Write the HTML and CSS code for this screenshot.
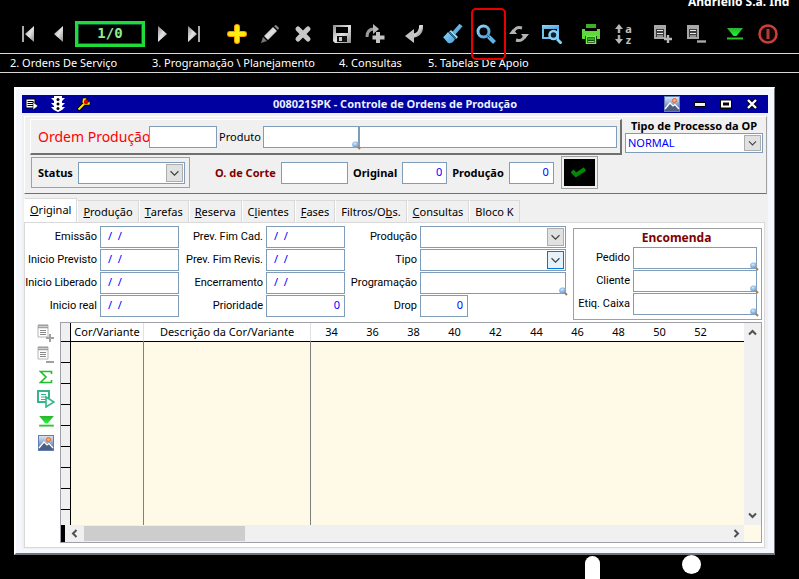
FILE: index.html
```html
<!DOCTYPE html>
<html lang="pt-BR">
<head>
    <meta charset="UTF-8">
    <meta name="viewport" content="width=device-width, initial-scale=1.0">
    <title>Controle de Ordens de Produção</title>
    <link rel="stylesheet" href="styles.css">
</head>
<body>
    <!-- Shared icons -->
    <svg class="defs" width="0" height="0">
        <defs>
            <linearGradient id="silver" x1="0" y1="0" x2="1" y2="1">
                <stop offset="0" stop-color="#8c8c8c"/>
                <stop offset="0.5" stop-color="#e4e4e4"/>
                <stop offset="1" stop-color="#8c8c8c"/>
            </linearGradient>
            <linearGradient id="sky" x1="0" y1="0" x2="1" y2="1">
                <stop offset="0" stop-color="#8ed8fa"/>
                <stop offset="1" stop-color="#4aa0dc"/>
            </linearGradient>
            <linearGradient id="photo" x1="0" y1="0" x2="0" y2="1">
                <stop offset="0" stop-color="#dfe8f4"/>
                <stop offset="1" stop-color="#3c62a4"/>
            </linearGradient>
            <linearGradient id="leaf" x1="0" y1="0" x2="0" y2="1">
                <stop offset="0" stop-color="#2fae2f"/>
                <stop offset="1" stop-color="#12ff30"/>
            </linearGradient>
            <radialGradient id="lens" cx="0.4" cy="0.3" r="0.8">
                <stop offset="0" stop-color="#d8ecff"/>
                <stop offset="1" stop-color="#4f86c8"/>
            </radialGradient>
            <symbol id="lookup" viewBox="0 0 9 9">
                <path d="M5 5l3 3" stroke="#b07a3a" stroke-width="2"/>
                <ellipse cx="3.6" cy="3.6" rx="3.2" ry="2.9" fill="url(#lens)" stroke="#8ab0dc" stroke-width="0.6"/>
            </symbol>
            <symbol id="chevron" viewBox="0 0 17 18">
                <path d="M4 7l4.500 4.500L13 7" fill="none" stroke="#404040" stroke-width="1.300"/>
            </symbol>
            <symbol id="picture" viewBox="0 0 16 16">
                <rect x="0.5" y="0.5" width="15" height="15" fill="url(#photo)" stroke="#5f7fb4"/>
                <path d="M1 13l5-6 3 3 2-1.500 4 4.500v2H1z" fill="#4c5f80"/>
                <path d="M1 13l5-6 3 3 2-1.500 4 4.500" fill="none" stroke="#fff" stroke-width="1.200"/>
                <circle cx="10.500" cy="4.500" r="2" fill="#ffb060" stroke="#e8632c"/>
            </symbol>
            <symbol id="row-add" viewBox="0 0 20 20">
                <path d="M1 1h12v14H1z" fill="#a8a8a8"/>
                <path d="M3 5h8v8H3z" fill="#3c3c3c"/>
                <path d="M4 6.500h6M4 9.500h6M4 12h6" stroke="#e8e8e8"/>
                <path d="M15 11v8M11 15h8" stroke="#b8b8b8" stroke-width="2.400"/>
            </symbol>
            <symbol id="row-del" viewBox="0 0 20 20">
                <path d="M1 1h12v14H1z" fill="#a8a8a8"/>
                <path d="M3 5h8v8H3z" fill="#3c3c3c"/>
                <path d="M4 6.500h6M4 9.500h6M4 12h6" stroke="#e8e8e8"/>
                <path d="M11 17.500h9" stroke="#a8a8a8" stroke-width="2.400"/>
            </symbol>
            <symbol id="sheet" viewBox="0 0 18 18">
                <path d="M1 1h10v12H1z" fill="#fff" stroke="#b4b4b4"/>
                <path d="M1 1.500h10M1 3.500h10" stroke="#a0a0a0" stroke-width="1.500"/>
                <path d="M3 6.500h6M3 8.500h6M3 10.500h6" stroke="#888"/>
            </symbol>
            <symbol id="bottom" viewBox="0 0 16 12">
                <path d="M0 0h16l-6.500 8h-3z" fill="url(#leaf)"/>
                <path d="M0 10.500h16" stroke="#2cc42c" stroke-width="2"/>
            </symbol>
        </defs>
    </svg>

    <!-- Application toolbar -->
    <header class="app-header">
        <div class="company">Andriello S.a. Ind</div>
        <div class="toolbar">
            <div class="tool-group nav-back">
                <button class="tool" aria-label="Primeiro"><svg width="12" height="16"><path d="M1 0v16" stroke="#aaa" stroke-width="2"/><path d="M12 0v16L3 8z" fill="url(#silver)"/></svg></button>
                <button class="tool" aria-label="Anterior"><svg width="9" height="16"><path d="M9 0v16L0 8z" fill="url(#silver)"/></svg></button>
            </div>
            <output class="counter">1/0</output>
            <div class="tool-group nav-next">
                <button class="tool" aria-label="Próximo"><svg width="9" height="16"><path d="M0 0v16l9-8z" fill="url(#silver)"/></svg></button>
                <button class="tool" aria-label="Último"><svg width="12" height="16"><path d="M11 0v16" stroke="#aaa" stroke-width="2"/><path d="M0 0v16l9-8z" fill="url(#silver)"/></svg></button>
            </div>
            <div class="tool-group">
                <button class="tool" aria-label="Incluir"><svg width="20" height="20"><path d="M10 3v14M3 10h14" stroke="#ff9c00" stroke-width="6" stroke-linecap="round"/><path d="M10 3v14M3 10h14" stroke="#ffee10" stroke-width="4" stroke-linecap="round"/></svg></button>
                <button class="tool" aria-label="Alterar"><svg width="18" height="18"><path d="M0 18l2-6 4 4z" fill="#777"/><path d="M3 11L12 2l4 4-9 9z" fill="url(#silver)"/><path d="M13 1l2-1 3 3-1 2z" fill="#8c8c8c"/></svg></button>
                <button class="tool" aria-label="Excluir"><svg width="18" height="18"><path d="M4 4l10 10M14 4L4 14" stroke="#c8c8c8" stroke-width="5" stroke-linecap="round"/></svg></button>
            </div>
            <div class="tool-group">
                <button class="tool" aria-label="Salvar"><svg width="20" height="20"><path d="M1 1h18v18H3l-2-2z" fill="url(#silver)"/><path d="M4 3h12v6H4z" fill="#000"/><path d="M5 12h10v6H5z" fill="#111"/><path d="M7 13h3v4H7z" fill="#ccc"/></svg></button>
                <button class="tool" aria-label="Salvar e incluir"><svg width="20" height="20"><path d="M2 13q0-8 7-8" fill="none" stroke="#9a9a9a" stroke-width="3"/><path d="M8 0l6 5-6 5z" fill="#b8b8b8"/><path d="M13 8v11M7.500 13.500h12" stroke="#c4c4c4" stroke-width="4"/></svg></button>
            </div>
            <div class="tool-group">
                <button class="tool" aria-label="Desfazer"><svg width="18" height="18"><path d="M16 0q1 10-9 11" fill="none" stroke="url(#silver)" stroke-width="4"/><path d="M0 11l9-7v14z" fill="#c4c4c4"/></svg></button>
            </div>
            <div class="tool-group">
                <button class="tool" aria-label="Limpar"><svg width="20" height="20"><path d="M18 1l-7 8" stroke="#63b4e6" stroke-width="4"/><path d="M8 6l7 7-2 2-7-7z" fill="#9adcf8"/><path d="M5 8l7 7q-2 5-7 4L0 13q1 0 5-5z" fill="url(#sky)"/><path d="M6 7l7 7" stroke="#25648c"/></svg></button>
                <button class="tool marked" aria-label="Pesquisar"><svg width="20" height="20"><circle cx="7.500" cy="7.500" r="5.500" fill="none" stroke="url(#sky)" stroke-width="3"/><path d="M12.500 12.500l6 6" stroke="#63b4e6" stroke-width="4"/><path d="M11 11l3 3" stroke="#2a5878" stroke-width="1"/></svg></button>
                <button class="tool" aria-label="Atualizar"><svg width="20" height="18"><path d="M4 8q2-7 9-5M16 10q-2 7-9 5" fill="none" stroke="#b0b0b0" stroke-width="3"/><path d="M0 9h8L4 4zM12 9h8l-4 5z" fill="#b4b4b4"/></svg></button>
                <button class="tool" aria-label="Localizar"><svg width="20" height="20"><path d="M1 2h15v12H1z" fill="none" stroke="#6fc0ee" stroke-width="2"/><path d="M0 1h17v4H0z" fill="url(#sky)"/><circle cx="11.500" cy="11" r="4" fill="#0a2436" stroke="#86d0f4" stroke-width="2.500"/><path d="M15 15l4.500 4.500" stroke="#86d0f4" stroke-width="3"/></svg></button>
            </div>
            <div class="tool-group">
                <button class="tool" aria-label="Imprimir"><svg width="20" height="20"><path d="M5 0h10v4H5z" fill="#3fae2a"/><path d="M1 5h3v2h12V5h3v10h-3v-3H4v3H1z" fill="#5fd83c"/><path d="M5.500 12.500h9v7h-9z" fill="#174a10" stroke="#6cf048" stroke-width="1.500"/><path d="M7 15h6M7 17.500h6" stroke="#6cf048"/></svg></button>
                <button class="tool sort" aria-label="Ordenar">
                    <svg width="8" height="20"><path d="M4 4v5M4 11v5" stroke="#aaa" stroke-width="2.500"/><path d="M0 5l4-5 4 5zM0 15l4 5 4-5z" fill="#b8b8b8"/></svg>
                    <span class="sort-text">a<br>z</span>
                </button>
            </div>
            <div class="tool-group">
                <button class="tool" aria-label="Incluir item"><svg width="20" height="20"><use href="#row-add"/></svg></button>
                <button class="tool" aria-label="Excluir item"><svg width="20" height="20"><use href="#row-del"/></svg></button>
            </div>
            <div class="tool-group">
                <button class="tool" aria-label="Ir ao fim"><svg width="16" height="12"><use href="#bottom"/></svg></button>
                <button class="tool" aria-label="Sair"><svg width="20" height="20"><circle cx="10" cy="10" r="8.500" fill="#160404" stroke="#c8403c" stroke-width="2.500"/><path d="M10 5v10" stroke="#a8403c" stroke-width="3"/></svg></button>
            </div>
        </div>
        <nav class="menu">
            <a href="#">2. Ordens De Serviço</a>
            <a href="#">3. Programação \ Planejamento</a>
            <a href="#">4. Consultas</a>
            <a href="#">5. Tabelas De Apoio</a>
        </nav>
    </header>

    <main class="window">
        <div class="titlebar">
            <div class="title-icons">
                <svg width="14" height="14"><path d="M1 2h9v9H1z" fill="#fff" stroke="#000"/><path d="M2.500 4.500h6M2.500 6.500h6M2.500 8.500h6" stroke="#000"/><path d="M8 5l5 4-5 4z" fill="#fff" stroke="#000" stroke-width="0.600"/></svg>
                <svg width="14" height="16"><path d="M3 0h8v14l-4 2-4-2zM0 2h14l-3 3H3zM0 7h14l-3 3H3zM0 11h14l-3 3H3z" fill="#fff"/><circle cx="7" cy="3.500" r="1.500"/><circle cx="7" cy="8" r="1.500"/><circle cx="7" cy="12.500" r="1.500"/></svg>
                <svg width="14" height="14"><path d="M1 13l6-6" stroke="#000" stroke-width="4"/><path d="M6 1h4L8 4l2 2 3-2v4H7L5 5z" fill="#ffe800" stroke="#000" stroke-width="0.600"/><path d="M1.500 12.500L7 7" stroke="#ffe800" stroke-width="2"/><circle cx="9" cy="5" r="2.200" fill="#e00000"/></svg>
            </div>
            <h1>008021SPK - Controle de Ordens de Produção</h1>
            <div class="title-buttons">
                <button aria-label="Imagem"><svg width="16" height="16"><use href="#picture"/></svg></button>
                <button aria-label="Minimizar"><svg width="12" height="12"><path d="M0.500 4.500h11v4H0.500z" fill="#f0f0f0" stroke="#000"/></svg></button>
                <button aria-label="Maximizar"><svg width="12" height="12"><path d="M0 1h12v10H0z" fill="#000"/><path d="M2 3.500h8v5H2z" fill="none" stroke="#fff" stroke-width="2"/></svg></button>
                <button aria-label="Fechar"><svg width="12" height="12"><path d="M2 2l8 8M10 2l-8 8" stroke="#000" stroke-width="4"/><path d="M2 2l8 8M10 2l-8 8" stroke="#fff" stroke-width="2.400"/></svg></button>
            </div>
        </div>

        <form class="content">
            <!-- Order header -->
            <section class="order">
                <div class="order-main">
                    <div class="raised">
                        <label class="order-label" for="ordem">Ordem Produção</label>
                        <input class="field w-order" id="ordem" type="text">
                        <label for="produto">Produto</label>
                        <span class="lookup w-product">
                            <input class="field" id="produto" type="text">
                            <svg width="9" height="9"><use href="#lookup"/></svg>
                        </span>
                        <input class="field grow" type="text" aria-label="Descrição do produto">
                    </div>
                    <div class="order-row">
                        <div class="status">
                            <label for="status">Status</label>
                            <span class="combo">
                                <select class="field" id="status"><option></option></select>
                                <svg width="17" height="18"><use href="#chevron"/></svg>
                            </span>
                        </div>
                        <label class="corte-label" for="corte">O. de Corte</label>
                        <input class="field w-corte" id="corte" type="text">
                        <label for="original">Original</label>
                        <input class="field number w-qty" id="original" type="text" value="0">
                        <label for="producao">Produção</label>
                        <input class="field number w-qty" id="producao" type="text" value="0">
                        <button class="confirm" type="button" aria-label="Confirmar"><svg width="16" height="12"><path d="M1 4l4 4 9-6" fill="none" stroke="#008a00" stroke-width="4"/></svg></button>
                    </div>
                </div>
                <div class="process">
                    <label for="processo">Tipo de Processo da OP</label>
                    <span class="combo">
                        <select class="field" id="processo"><option>NORMAL</option></select>
                        <svg width="17" height="16"><use href="#chevron"/></svg>
                    </span>
                </div>
            </section>

            <nav class="tabs">
                <button type="button" class="tab active"><u>O</u>riginal</button>
                <button type="button" class="tab"><u>P</u>rodução</button>
                <button type="button" class="tab"><u>T</u>arefas</button>
                <button type="button" class="tab"><u>R</u>eserva</button>
                <button type="button" class="tab">C<u>l</u>ientes</button>
                <button type="button" class="tab"><u>F</u>ases</button>
                <button type="button" class="tab">Filtros/O<u>b</u>s.</button>
                <button type="button" class="tab"><u>C</u>onsultas</button>
                <button type="button" class="tab">Bloco K</button>
            </nav>

            <section class="tab-panel">
                <div class="details">
                    <div class="fields">
                        <label for="emissao">Emissão</label>
                        <input class="field date" id="emissao" type="text" value="/  /">
                        <label for="fimcad">Prev. Fim Cad.</label>
                        <input class="field date" id="fimcad" type="text" value="/  /">
                        <label for="prod">Produção</label>
                        <span class="combo">
                            <select class="field" id="prod"><option></option></select>
                            <svg width="17" height="18"><use href="#chevron"/></svg>
                        </span>

                        <label for="previsto">Inicio Previsto</label>
                        <input class="field date" id="previsto" type="text" value="/  /">
                        <label for="fimrevis">Prev. Fim Revis.</label>
                        <input class="field date" id="fimrevis" type="text" value="/  /">
                        <label for="tipo">Tipo</label>
                        <span class="combo hot">
                            <select class="field" id="tipo"><option></option></select>
                            <svg width="17" height="18"><use href="#chevron"/></svg>
                        </span>

                        <label for="liberado">Inicio Liberado</label>
                        <input class="field date" id="liberado" type="text" value="/  /">
                        <label for="encerramento">Encerramento</label>
                        <input class="field date" id="encerramento" type="text" value="/  /">
                        <label for="programacao">Programação</label>
                        <span class="lookup">
                            <input class="field" id="programacao" type="text">
                            <svg width="9" height="9"><use href="#lookup"/></svg>
                        </span>

                        <label for="real">Inicio real</label>
                        <input class="field date" id="real" type="text" value="/  /">
                        <label for="prioridade">Prioridade</label>
                        <input class="field number" id="prioridade" type="text" value="0">
                        <label for="drop">Drop</label>
                        <input class="field number w-drop" id="drop" type="text" value="0">
                    </div>
                    <fieldset class="customer">
                        <h2>Encomenda</h2>
                        <div class="customer-fields">
                            <label for="pedido">Pedido</label>
                            <span class="lookup">
                                <input class="field" id="pedido" type="text">
                                <svg width="9" height="9"><use href="#lookup"/></svg>
                            </span>
                            <label for="cliente">Cliente</label>
                            <span class="lookup">
                                <input class="field" id="cliente" type="text">
                                <svg width="9" height="9"><use href="#lookup"/></svg>
                            </span>
                            <label for="caixa">Etiq. Caixa</label>
                            <span class="lookup">
                                <input class="field" id="caixa" type="text">
                                <svg width="9" height="9"><use href="#lookup"/></svg>
                            </span>
                        </div>
                    </fieldset>
                </div>

                <div class="items">
                    <div class="side-tools">
                        <button type="button" aria-label="Incluir linha"><svg width="18" height="18"><use href="#sheet"/><path d="M13 10v8M9 14h8" stroke="#a0a0a0" stroke-width="2"/></svg></button>
                        <button type="button" aria-label="Excluir linha"><svg width="18" height="18"><use href="#sheet"/><path d="M9 16h8" stroke="#a0a0a0" stroke-width="2"/></svg></button>
                        <button type="button" aria-label="Somar"><svg width="14" height="14"><path d="M12.500 4V1.500H1.500L7 7l-5.500 5.500h11V10" fill="none" stroke="#1fc02c" stroke-width="1.600"/></svg></button>
                        <button type="button" aria-label="Executar"><svg width="18" height="18"><path d="M1 1h11v11H1z" fill="#fff" stroke="#35b58c" stroke-width="2"/><path d="M4 4.500h5M4 7h5M4 9.500h5" stroke="#35b58c"/><path d="M9 7l8 5-8 5z" fill="#fff" stroke="#35b58c" stroke-width="1.600"/></svg></button>
                        <button type="button" aria-label="Última linha"><svg width="15" height="11"><use href="#bottom"/></svg></button>
                        <button type="button" aria-label="Imagem"><svg width="16" height="16"><use href="#picture"/></svg></button>
                    </div>
                    <div class="grid">
                        <table class="grid-table">
                            <thead>
                                <tr>
                                    <th class="col-mark"></th>
                                    <th class="col-color">Cor/Variante</th>
                                    <th class="col-name">Descrição da Cor/Variante</th>
                                    <th>34</th>
                                    <th>36</th>
                                    <th>38</th>
                                    <th>40</th>
                                    <th>42</th>
                                    <th>44</th>
                                    <th>46</th>
                                    <th>48</th>
                                    <th>50</th>
                                    <th>52</th>
                                    <th class="col-rest"></th>
                                </tr>
                            </thead>
                            <tbody>
                                <tr><td></td><td></td><td></td><td colspan="11"></td></tr>
                                <tr><td></td><td></td><td></td><td colspan="11"></td></tr>
                                <tr><td></td><td></td><td></td><td colspan="11"></td></tr>
                                <tr><td></td><td></td><td></td><td colspan="11"></td></tr>
                                <tr><td></td><td></td><td></td><td colspan="11"></td></tr>
                                <tr><td></td><td></td><td></td><td colspan="11"></td></tr>
                                <tr><td></td><td></td><td></td><td colspan="11"></td></tr>
                                <tr><td></td><td></td><td></td><td colspan="11"></td></tr>
                                <tr class="last"><td></td><td></td><td></td><td colspan="11"></td></tr>
                            </tbody>
                        </table>
                        <div class="scroll-v">
                            <svg width="9" height="7"><path d="M1 5.500l3.500-3.500 3.500 3.500" fill="none" stroke="#505050" stroke-width="2"/></svg>
                            <svg width="9" height="7"><path d="M1 1.500l3.500 3.500 3.500-3.500" fill="none" stroke="#505050" stroke-width="2"/></svg>
                        </div>
                        <div class="scroll-h">
                            <svg width="7" height="9"><path d="M5.500 1L2 4.500l3.500 3.500" fill="none" stroke="#505050" stroke-width="2"/></svg>
                            <div class="track"><div class="thumb"></div></div>
                            <svg width="7" height="9"><path d="M1.500 1l3.500 3.500-3.500 3.500" fill="none" stroke="#505050" stroke-width="2"/></svg>
                        </div>
                        <div class="corner"></div>
                    </div>
                </div>
            </section>
        </form>
    </main>

    <!-- Top of the wallpaper logo -->
    <footer class="wallpaper">
        <div class="bar"></div>
        <div class="dot"></div>
    </footer>
</body>
</html>
```
FILE: styles.css
```css
* {
    box-sizing: border-box;
}

body {
    margin: 0;
    background-color: #000;
    font-family: "Noto Sans", "Liberation Sans", sans-serif;
    font-size: 11px;
    line-height: 14px;
    color: #000;
}

button, input, select {
    font: inherit;
    margin: 0;
    padding: 0;
    border-radius: 0;
}

button {
    background: none;
    border: none;
    display: flex;
    align-items: center;
    justify-content: center;
}

svg {
    display: block;
    flex-shrink: 0;
}

.defs {
    position: absolute;
}

/* Toolbar */
.company {
    height: 14px;
    overflow: hidden;
    white-space: nowrap;
    color: #fff;
    font-size: 12px;
    font-weight: bold;
    line-height: 4px;
    padding-left: 688px;
}

.toolbar {
    display: flex;
    align-items: center;
    gap: 6px;
    height: 39px;
    padding-left: 12px;
}

.tool-group {
    display: flex;
}

.tool {
    position: relative;
    width: 33px;
    height: 32px;
}

.nav-back {
    margin-right: -5px;
}

.nav-back .tool {
    width: 31px;
}

.nav-next {
    margin: 0 4px 0 -5px;
}

.nav-next .tool {
    width: 32px;
}

.counter {
    width: 70px;
    height: 26px;
    border: 3px solid #1fdc38;
    outline: 1px solid #0a5a3c;
    outline-offset: -4px;
    color: #90ee90;
    font-family: "DejaVu Sans Mono", monospace;
    font-size: 14px;
    font-weight: bold;
    line-height: 18px;
    text-align: center;
}

.marked::after {
    content: "";
    position: absolute;
    inset: -10px -4px -10px 2px;
    border: 2px solid #e80000;
    border-radius: 5px;
}

.sort {
    gap: 2px;
}

.sort-text {
    color: #c0c0c0;
    font-size: 11px;
    font-weight: bold;
    line-height: 11px;
}

.menu {
    display: grid;
    grid-template-columns: 142px 187px 89px auto;
    align-items: center;
    height: 20px;
    padding-left: 10px;
    border-top: 1px solid #d8d8d8;
    border-bottom: 1px solid #d8d8d8;
}

.menu a {
    color: #fff;
    text-decoration: none;
    white-space: nowrap;
}

/* Window */
.window {
    margin: 14px 24px 0 14px;
    padding: 6px 6px 4px;
    background-color: #f4f8fe;
    border: 2px solid;
    border-color: #fff #707478 #707478 #fff;
    border-right-width: 1px;
}

.titlebar {
    display: grid;
    grid-template-columns: 105px 1fr 105px;
    align-items: center;
    height: 18px;
    background-color: #0000a0;
}

.title-icons {
    display: flex;
    align-items: center;
    gap: 12px;
    padding-left: 3px;
}

.titlebar h1 {
    margin: 0;
    color: #e8f0ff;
    font-size: 11px;
    text-align: center;
    white-space: nowrap;
}

.title-buttons {
    display: flex;
    align-items: center;
    justify-content: flex-end;
    gap: 14px;
    padding-right: 10px;
}

.content {
    padding: 3px 1px 1px 2px;
    background-color: #f0f0f0;
}

/* Order header */
.order {
    display: flex;
    gap: 3px;
    height: 78px;
    padding: 2px 3px 0 5px;
    border: 1px solid;
    border-color: #fff #a0a0a0 #707070 #fff;
    font-weight: bold;
}

.order-main {
    flex: 1;
}

.raised {
    display: flex;
    align-items: center;
    gap: 2px;
    height: 36px;
    padding: 0 3px 0 7px;
    border: 1px solid;
    border-color: #fff #707070 #707070 #fff;
    border-right-width: 2px;
    border-bottom-width: 2px;
    font-weight: normal;
}

.order-label {
    width: 109px;
    color: #ff0000;
    font-size: 14px;
    white-space: nowrap;
}

.order-row {
    display: flex;
    align-items: center;
    gap: 5px;
    height: 33px;
    margin-top: 1px;
    white-space: nowrap;
}

.status {
    display: flex;
    align-items: center;
    justify-content: space-between;
    width: 159px;
    height: 31px;
    margin-left: 1px;
    padding: 0 4px 0 6px;
    border: 1px solid #a0a0a0;
}

.status .combo {
    width: 107px;
}

.corte-label {
    width: 61px;
    margin-left: 20px;
    color: #800000;
}

.confirm {
    width: 37px;
    height: 33px;
    margin-left: 2px;
    background-color: #000;
    border: 1px solid #a0a0a0;
    outline: 2px solid #f0f0f0;
    outline-offset: -3px;
}

.process {
    width: 138px;
    text-align: center;
    white-space: nowrap;
}

.process .field {
    height: 20px;
    padding-left: 2px;
}

/* Form controls */
.field {
    width: 100%;
    height: 22px;
    background-color: #fff;
    border: 1px solid #7f9db9;
    color: #0000ff;
    font-weight: normal;
    outline: none;
}

select.field {
    appearance: none;
    display: block;
}

.number {
    padding: 0 4px 3px 0;
    text-align: right;
}

.date {
    padding: 0 0 3px 7px;
    white-space: pre;
}

.grow {
    flex: 1;
    width: auto;
    margin-left: -2px;
}

.w-order {
    width: 68px;
}

.w-product {
    width: 96px;
}

.w-corte {
    width: 67px;
}

.w-qty {
    width: 45px;
}

.w-drop {
    width: 48px;
}

.combo, .lookup {
    position: relative;
    display: block;
}

.combo svg {
    position: absolute;
    top: 2px;
    right: 2px;
    background-color: #e1e1e1;
    border: 1px solid #adadad;
    pointer-events: none;
}

.hot svg {
    background-color: #e5f1fb;
    border-color: #0078d7;
}

.lookup .field {
    display: block;
}

.lookup svg {
    position: absolute;
    right: -2px;
    bottom: -2px;
}

/* Tabs */
.tabs {
    display: flex;
    align-items: flex-end;
    height: 28px;
}

.tab {
    height: 22px;
    padding: 0 5px;
    border: 1px solid #d9d9d9;
    border-left-color: #fff;
    border-bottom: none;
    white-space: nowrap;
}

.tab.active {
    height: 24px;
    padding-bottom: 1px;
    background-color: #fff;
}

.tab-panel {
    margin-right: 2px;
    padding: 3px 2px 4px 3px;
    background-color: #fff;
    border: 1px solid #d9d9d9;
}

.details {
    display: flex;
    gap: 7px;
    height: 96px;
}

.fields {
    flex: 1;
    display: grid;
    grid-template-columns: 69px 79px 81px 79px 69px 1fr;
    grid-auto-rows: 22px;
    column-gap: 3px;
    row-gap: 1px;
    align-items: center;
}

.fields label, .customer-fields label {
    justify-self: end;
    font-family: Roboto, "Liberation Sans", sans-serif;
    white-space: nowrap;
}

.customer {
    width: 189px;
    height: 92px;
    margin: 2px 0 0;
    padding: 0 4px 0 2px;
    border: 1px solid #a0a0a0;
}

.customer h2 {
    margin: 0;
    padding-left: 20px;
    color: #800000;
    font-size: 12px;
    line-height: 18px;
    text-align: center;
}

.customer-fields {
    display: grid;
    grid-template-columns: 54px 1fr;
    grid-auto-rows: 22px;
    column-gap: 3px;
    row-gap: 1px;
    align-items: center;
}

/* Items grid */
.items {
    display: flex;
    gap: 4px;
}

.side-tools {
    display: flex;
    flex-direction: column;
    width: 28px;
    padding-left: 8px;
}

.side-tools button {
    height: 22px;
}

.grid {
    flex: 1;
    display: grid;
    grid-template-columns: 1fr 17px;
    grid-template-rows: 202px 17px;
    border: 1px solid #a0a0a8;
    background-color: #fff9e8;
}

.grid-table {
    width: 100%;
    table-layout: fixed;
    border-collapse: separate;
    border-spacing: 0;
}

.grid-table th {
    width: 41px;
    height: 19px;
    padding: 0;
    background-color: #fff;
    border-bottom: 1px solid #000;
    font-weight: normal;
    white-space: nowrap;
}

.grid-table .col-mark {
    width: 10px;
    background-color: #f0f0f0;
    border-right: 1px solid #000;
}

.grid-table .col-color {
    width: 73px;
    border-right: 1px solid #e0e0e0;
}

.grid-table .col-name {
    width: 167px;
    border-right: 1px solid #e0e0e0;
}

.grid-table .col-rest {
    width: auto;
}

.grid-table td {
    height: 21px;
    padding: 0;
    border-right: 1px solid #808080;
}

.grid-table td:first-child {
    background-color: #f0f0f0;
    border-right-color: #000;
    border-bottom: 1px solid #000;
}

.grid-table td:last-child {
    border-right: none;
}

.grid-table .last td {
    height: 15px;
    border-bottom: none;
}

.scroll-v {
    display: flex;
    flex-direction: column;
    align-items: center;
    justify-content: space-between;
    padding: 6px 0;
    background-color: #f0f0f0;
}

.scroll-h {
    display: flex;
    align-items: center;
    gap: 6px;
    padding: 0 4px 0 6px;
    background-color: #f0f0f0;
    border-left: 4px solid #000;
}

.track {
    flex: 1;
}

.thumb {
    width: 25%;
    height: 15px;
    background-color: #cdcdcd;
}

/* Wallpaper */
.wallpaper {
    display: flex;
    gap: 82px;
    height: 25px;
    padding-left: 585px;
    overflow: hidden;
}

.bar {
    width: 15px;
    margin-top: 1px;
    background-color: #fff;
    border-radius: 8px 8px 0 0;
}

.dot {
    width: 19px;
    height: 19px;
    background-color: #fff;
    border-radius: 50%;
}
```
